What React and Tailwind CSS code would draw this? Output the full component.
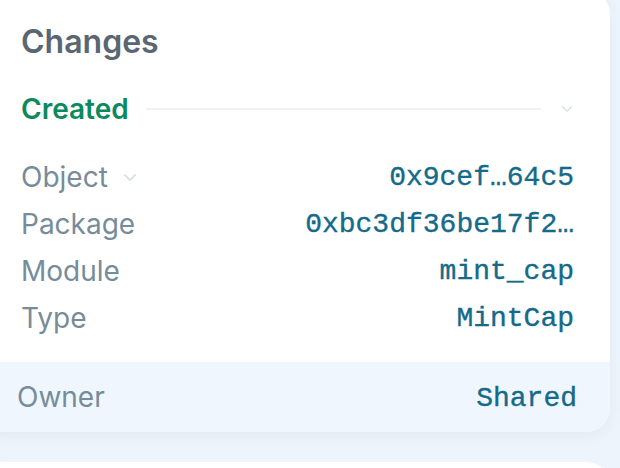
import React from "react";

const Chevron = ({ className = "" }) => (
  <svg viewBox="0 0 16 10" fill="none" className={className}>
    <path d="M2 2l6 6 6-6" stroke="currentColor" strokeWidth="2" strokeLinecap="round" strokeLinejoin="round" />
  </svg>
);

const rows = [
  { label: "Object", value: "0x9cef…64c5", chevron: true },
  { label: "Package", value: "0xbc3df36be17f2…" },
  { label: "Module", value: "mint_cap" },
  { label: "Type", value: "MintCap" },
];

const mono = { fontFamily: '"Liberation Mono", "DejaVu Sans Mono", monospace' };

export default function App() {
  return (
    <div
      className="w-[620px] h-[468px] overflow-hidden bg-[#edf4fb] flex flex-col"
      style={{ fontFamily: "Inter, 'Noto Sans', sans-serif" }}
    >
      <div className="-mt-[10px] -ml-[20px] w-[630px] shrink-0 bg-white rounded-3xl overflow-hidden shadow-[0_4px_14px_rgba(40,80,120,0.06)]">
        <div className="pl-[41px] pr-[36px] pt-[32px]">
          <h2 className="text-[32px] leading-[40px] font-semibold text-[#5a6672]">Changes</h2>

          <div className="mt-[29px] flex items-center h-[36px]">
            <span className="text-[28px] leading-[36px] font-semibold text-[#0b8a5e]">Created</span>
            <div className="ml-[17px] h-[2px] w-[395px] bg-[#eff1f3]" />
            <Chevron className="ml-[20px] w-[12px] h-[8px] text-[#dde2e6]" />
          </div>

          <div className="mt-[27px] flex flex-col">
            {rows.map((r) => (
              <div key={r.label} className="h-[47px] flex items-center justify-between">
                <div className="flex items-center">
                  <span className="text-[28px] leading-[47px] text-[#778c9b]">{r.label}</span>
                  {r.chevron && <Chevron className="ml-[15px] w-[14px] h-[9px] text-[#d9dfe4]" />}
                </div>
                <span
                  className="text-[28px] leading-[47px] text-[#146a89] [-webkit-text-stroke:0.35px_#146a89]"
                  style={mono}
                >
                  {r.value}
                </span>
              </div>
            ))}
          </div>
        </div>

        <div className="mt-[20px] h-[70px] bg-[#eff6fd] pl-[37px] pr-[33px] flex items-center justify-between">
          <span className="text-[28px] text-[#778c9b]">Owner</span>
          <span
            className="text-[28px] pt-[3px] text-[#146a89] [-webkit-text-stroke:0.35px_#146a89]"
            style={mono}
          >
            Shared
          </span>
        </div>
      </div>

      <div className="mt-[30px] -ml-[20px] w-[630px] h-[120px] shrink-0 bg-white rounded-3xl" />
    </div>
  );
}
